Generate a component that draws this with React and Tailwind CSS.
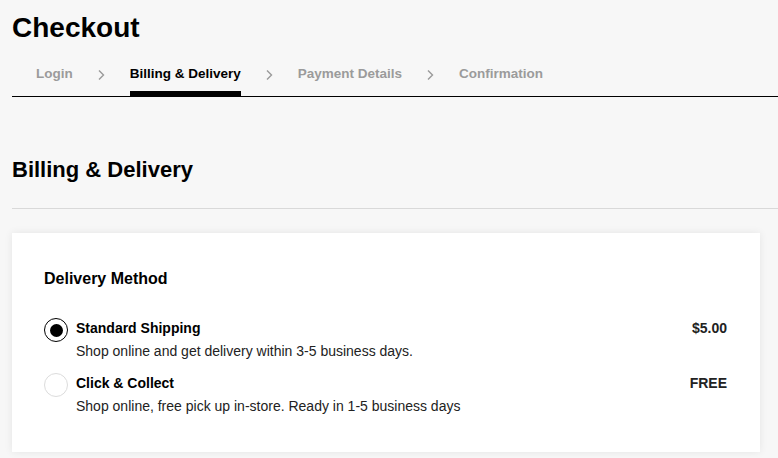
import React from "react";

function Chevron() {
  return (
    <svg width="7" height="12" viewBox="0 0 7 12" className="mt-[3px] shrink-0">
      <path d="M1 1.5 L5.5 6 L1 10.5" fill="none" stroke="#9a9a9a" strokeWidth="1.4" />
    </svg>
  );
}

function Radio({ checked }) {
  return checked ? (
    <div className="w-6 h-6 rounded-full border-[1.5px] border-black flex items-center justify-center shrink-0">
      <div className="w-[13px] h-[13px] rounded-full bg-black" />
    </div>
  ) : (
    <div className="w-6 h-6 rounded-full border-[1.5px] border-[#dcdcdc] bg-white shrink-0" />
  );
}

function Option({ checked, title, desc, price }) {
  return (
    <div className="flex items-start">
      <Radio checked={checked} />
      <div className="flex-1 ml-2">
        <div className="text-[14px] leading-5 font-bold text-black">{title}</div>
        <div className="text-[14px] leading-5 mt-[3px] text-[#222]">{desc}</div>
      </div>
      <div className="text-[14px] leading-5 font-bold text-[#222]">{price}</div>
    </div>
  );
}

export default function App() {
  const tabs = ["Login", "Billing & Delivery", "Payment Details", "Confirmation"];
  return (
    <div
      className="min-h-[458px] bg-[#f7f7f7] pl-3"
      style={{ fontFamily: '"Liberation Sans", Arial, sans-serif' }}
    >
      <h1 className="pt-3 text-[28px] leading-8 font-bold text-black">Checkout</h1>
      <nav className="mt-[22px] flex items-start border-b border-black pl-6 gap-[25px]">
        {tabs.map((t, i) => (
          <React.Fragment key={t}>
            {i > 0 && <Chevron />}
            <div
              className={
                i === 1
                  ? "text-[13.5px] leading-4 font-bold text-black pb-[9px] border-b-[6px] border-black -mb-px"
                  : "text-[13.5px] leading-4 font-bold text-[#9b9b9b]"
              }
            >
              {t}
            </div>
          </React.Fragment>
        ))}
      </nav>
      <h2 className="mt-[59px] text-[22px] leading-7 font-bold text-black">Billing &amp; Delivery</h2>
      <div className="mt-6 border-t border-[#d9d9d9]" />
      <div className="mt-6 mr-[18px] bg-white shadow-[0_0_8px_rgba(0,0,0,0.08)] pt-[36px] pb-9 pl-8 pr-[33px]">
        <h3 className="text-[16px] leading-5 font-bold text-black">Delivery Method</h3>
        <div className="mt-[29px] flex flex-col gap-3">
          <Option
            checked
            title="Standard Shipping"
            desc="Shop online and get delivery within 3-5 business days."
            price="$5.00"
          />
          <Option
            title="Click & Collect"
            desc="Shop online, free pick up in-store. Ready in 1-5 business days"
            price="FREE"
          />
        </div>
      </div>
    </div>
  );
}
